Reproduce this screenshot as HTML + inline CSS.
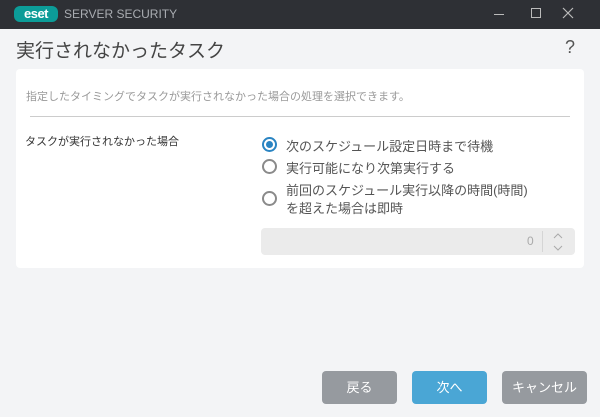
<!DOCTYPE html>
<html><head><meta charset="utf-8"><style>
*{margin:0;padding:0;box-sizing:border-box}
body{width:600px;height:417px;background:#f3f4f6;font-family:"Liberation Sans","Noto Sans CJK JP",sans-serif;position:relative;overflow:hidden;color:#333}
.a{position:absolute}
.tb{left:0;top:0;width:600px;height:29px;background:#2e3035}
.logo{left:14px;top:6px;width:44px;height:16px;background:#0c9c98;border-radius:6px;color:#fff;font-weight:bold;font-size:13px;line-height:16px;text-align:center;letter-spacing:-0.5px}
.card{left:16px;top:69px;width:568px;height:199px;background:#fff;border-radius:4px}
.r{width:15px;height:15px;border:2px solid #8a8a8a;border-radius:50%;background:#fff}
.r.on{border-color:#2a84c2}
.r.on::after{content:"";position:absolute;left:2px;top:2px;width:7px;height:7px;border-radius:50%;background:#2a84c2}
.t{font-size:13px;color:#555;white-space:nowrap}
.b{top:371px;height:33px;border-radius:4px;background:#969a9f;color:#fff;font-size:13px;line-height:33px;text-align:center}
</style></head><body>
<div class="a tb"></div>
<div class="a logo">eset</div>
<div class="a" style="left:64px;top:7px;color:#a9acb1;font-size:12px">SERVER SECURITY</div>
<div class="a" style="left:494px;top:14px;width:10px;height:1px;background:#bbb"></div>
<div class="a" style="left:531px;top:8px;width:10px;height:10px;border:1px solid #bbb"></div>
<svg class="a" style="left:562px;top:7px" width="12" height="12"><path d="M1 1L11 11M11 1L1 11" stroke="#bbb" stroke-width="1.2"/></svg>
<div class="a" style="left:16px;top:36px;font-size:19px;color:#444">実行されなかったタスク</div>
<div class="a" style="left:565px;top:37px;font-size:18px;color:#555">?</div>
<div class="a card"></div>
<div class="a" style="left:26px;top:88px;font-size:11px;color:#999">指定したタイミングでタスクが実行されなかった場合の処理を選択できます。</div>
<div class="a" style="left:30px;top:116px;width:540px;height:1px;background:#ccc"></div>
<div class="a" style="left:25px;top:133px;font-size:11px;color:#333">タスクが実行されなかった場合</div>
<div class="a r on" style="left:262px;top:137px"></div>
<div class="a t" style="left:286px;top:136px">次のスケジュール設定日時まで待機</div>
<div class="a r" style="left:262px;top:159px"></div>
<div class="a t" style="left:286px;top:158px">実行可能になり次第実行する</div>
<div class="a r" style="left:262px;top:191px"></div>
<div class="a t" style="left:286px;top:182px;line-height:18px">前回のスケジュール実行以降の時間(時間)<br>を超えた場合は即時</div>
<div class="a" style="left:261px;top:228px;width:314px;height:27px;background:#ebebeb;border-radius:4px"></div>
<div class="a" style="left:527px;top:234px;font-size:12px;color:#aaa">0</div>
<div class="a" style="left:542px;top:231px;width:1px;height:21px;background:#d5d5d5"></div>
<svg class="a" style="left:552px;top:232px" width="12" height="20"><path d="M2 6L6 2L10 6M2 14L6 18L10 14" stroke="#aaa" fill="none"/></svg>
<div class="a b" style="left:322px;width:75px">戻る</div>
<div class="a b" style="left:412px;width:75px;background:#4aa6d5">次へ</div>
<div class="a b" style="left:502px;width:85px">キャンセル</div>
</body></html>
